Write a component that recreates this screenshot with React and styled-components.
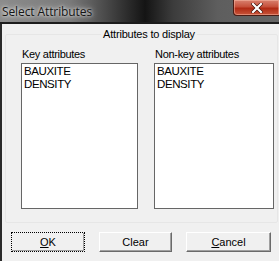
import React from "react";
import styled, { createGlobalStyle } from "styled-components";

const GlobalStyle = createGlobalStyle`
  html, body {
    margin: 0;
    padding: 0;
    background: #f0f0f0;
    overflow: hidden;
  }
  body {
    font-family: "Liberation Sans", Arial, sans-serif;
    font-size: 11px;
  }
`;

const Window = styled.div`
  width: 279px;
  height: 261px;
  display: flex;
  flex-direction: column;
  overflow: hidden;
`;

const TitleBar = styled.div`
  height: 22px;
  flex-shrink: 0;
  display: flex;
  align-items: flex-start;
  border-bottom: 2px solid #1c1c1c;
  background: linear-gradient(
    90deg,
    #8c8c8c 0%,
    #7a7a7a 25%,
    #3a3a3a 42%,
    #141414 52%,
    #3c3c3c 62%,
    #5e5e5e 78%,
    #666 100%
  );
`;

const Title = styled.span`
  padding: 3px 0 0 2px;
  font-family: "Open Sans", "Noto Sans", sans-serif;
  font-size: 12px;
  letter-spacing: -0.1px;
  color: #151515;
  text-shadow: 0 0 6px rgba(255, 255, 255, 0.9), 0 0 3px rgba(255, 255, 255, 0.8);
`;

const CloseButton = styled.div`
  margin-left: auto;
  width: 45px;
  height: 15px;
  display: flex;
  align-items: center;
  justify-content: center;
  border: 1px solid #4a1c14;
  border-top: none;
  border-right: none;
  border-radius: 0 0 0 4px;
  background: linear-gradient(180deg, #d8816f 0%, #c6503a 45%, #b02a14 55%, #c8553a 100%);
  box-shadow: inset 0 0 0 1px rgba(255, 200, 180, 0.45);
`;

const Body = styled.div`
  flex: 1;
  display: flex;
  flex-direction: column;
  border-left: 2px solid #2a2a2a;
  padding: 4px 0 0 2px;
`;

const GroupBox = styled.fieldset`
  margin: 0 0 0 1px;
  width: 273px;
  box-sizing: border-box;
  padding: 7px 0 13px 15px;
  border: 1px solid #e6e6e6;
  border-radius: 2px;
`;

const Legend = styled.legend`
  margin: 0 auto;
  padding: 0 2px;
  line-height: 13px;
  font-size: 11px;
  letter-spacing: -0.2px;
  color: #000;
`;

const Columns = styled.div`
  display: flex;
  gap: 16px;
`;

const Column = styled.div`
  display: flex;
  flex-direction: column;
  width: ${(p) => p.$width}px;
`;

const Label = styled.div`
  line-height: 13px;
  margin: 0 0 2px 1px;
  letter-spacing: -0.3px;
  color: #000;
`;

const ListBox = styled.ul`
  list-style: none;
  margin: 0;
  padding: 1px 0 0 2px;
  height: 146px;
  box-sizing: border-box;
  background: #fff;
  border: 1px solid #666;
`;

const Item = styled.li`
  line-height: 13px;
  font-size: 11.5px;
  letter-spacing: -0.4px;
  color: #000;
`;

const ButtonRow = styled.div`
  display: flex;
  gap: 14px;
  padding: 9px 0 0 7px;
`;

const Button = styled.button`
  width: ${(p) => p.$width}px;
  height: 20px;
  padding: 0;
  font-family: "Liberation Sans", Arial, sans-serif;
  font-size: 11px;
  color: #000;
  background: #f0f0f0;
  border: 1px solid;
  border-color: ${(p) => (p.$default ? "#000" : "#fff #6a6a6a #6a6a6a #fff")};
  border-style: ${(p) => (p.$default ? "dotted" : "solid")};
  box-shadow: inset -1px -1px 0 #a0a0a0;

  u {
    text-decoration-thickness: 1px;
  }
`;

const lists = ["BAUXITE", "DENSITY"];

export default function App() {
  return (
    <Window>
      <GlobalStyle />
      <TitleBar>
        <Title>Select Attributes</Title>
        <CloseButton>
          <svg width="12" height="10" viewBox="0 0 12 10">
            <path d="M2 1 L10 9 M10 1 L2 9" stroke="#3a0c04" strokeWidth="3.4" strokeLinecap="square" />
            <path d="M2 1 L10 9 M10 1 L2 9" stroke="#fff" strokeWidth="2.2" strokeLinecap="square" />
          </svg>
        </CloseButton>
      </TitleBar>
      <Body>
        <GroupBox>
          <Legend>Attributes to display</Legend>
          <Columns>
            <Column $width={117}>
              <Label>Key attributes</Label>
              <ListBox>
                {lists.map((name) => (
                  <Item key={name}>{name}</Item>
                ))}
              </ListBox>
            </Column>
            <Column $width={120}>
              <Label>Non-key attributes</Label>
              <ListBox>
                {lists.map((name) => (
                  <Item key={name}>{name}</Item>
                ))}
              </ListBox>
            </Column>
          </Columns>
        </GroupBox>
        <ButtonRow>
          <Button $width={74} $default>
            <u>O</u>K
          </Button>
          <Button $width={73}>Clear</Button>
          <Button $width={85}>
            <u>C</u>ancel
          </Button>
        </ButtonRow>
      </Body>
    </Window>
  );
}
